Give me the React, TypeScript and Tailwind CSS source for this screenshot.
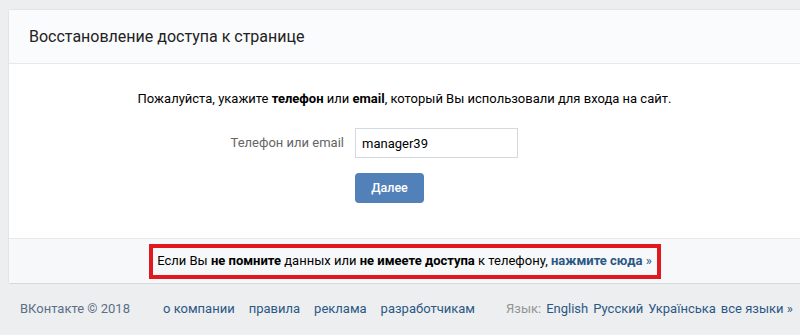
import { useState } from "react";

const footerLinks = ["о компании", "правила", "реклама", "разработчикам"];
const languages = ["English", "Русский", "Українська", "все языки »"];

export default function App() {
  const [login, setLogin] = useState("manager39");

  return (
    <div className="h-[335px] w-[800px] overflow-hidden bg-[#edeef0] pt-[10px] font-['Roboto','Open_Sans',sans-serif] text-[13px] text-black">
      {/* Card */}
      <div className="ml-[9px] w-[820px] rounded-[2px] bg-white shadow-[0_1px_0_0_#d7d8db,0_0_0_1px_#e3e4e8]">
        {/* Header */}
        <div className="flex h-[54px] items-center border-b border-[#e7e8ec] bg-[#fafbfc] px-[20px] text-[16px] text-[#222]">
          Восстановление доступа к странице
        </div>

        {/* Body */}
        <div className="flex h-[174px] w-[791px] flex-col pt-[26px]">
          <p className="text-center leading-[18px]">
            Пожалуйста, укажите <b>телефон</b> или <b>email</b>, который Вы
            использовали для входа на сайт.
          </p>

          <div className="mt-[20px] flex items-center">
            <label className="w-[346px] pr-[11px] text-right text-[#656565]">
              Телефон или email
            </label>
            <input
              autoFocus
              value={login}
              onChange={(e) => setLogin(e.target.value)}
              className="h-[30px] w-[163px] border border-[#d3d9de] px-[6px] text-[13px] text-black caret-black outline-none"
            />
          </div>

          <div className="mt-[15px] flex pl-[346px]">
            <button className="h-[30px] w-[69px] rounded-[4px] bg-[#5181b8] text-[12.5px] font-medium text-white">
              Далее
            </button>
          </div>
        </div>

        {/* Bottom note */}
        <div className="flex h-[45px] w-[791px] items-center justify-center border-t border-[#e7e8ec] bg-[#f7f8fa]">
          <div className="flex h-[35px] w-[512px] items-center justify-center border-4 border-[#e0191f] pb-[1px]">
            Если Вы&nbsp;<b>не помните</b>&nbsp;данных или&nbsp;
            <b>не имеете доступа</b>&nbsp;к телефону,&nbsp;
            <a className="font-bold text-[#2a5885]">нажмите сюда</a>
            <span className="text-[#2a5885]">&nbsp;»</span>
          </div>
        </div>
      </div>

      {/* Footer */}
      <div className="mt-[16px] flex items-center pl-[20px] text-[#2a5885]">
        <span className="w-[143px] text-[#5b6e85]">ВКонтакте © 2018</span>
        <div className="flex gap-[14px]">
          {footerLinks.map((l) => (
            <span key={l}>{l}</span>
          ))}
        </div>
        <div className="ml-[31px] flex gap-[5px]">
          <span className="text-[#939393]">Язык:</span>
          {languages.map((l) => (
            <span key={l}>{l}</span>
          ))}
        </div>
      </div>
    </div>
  );
}
